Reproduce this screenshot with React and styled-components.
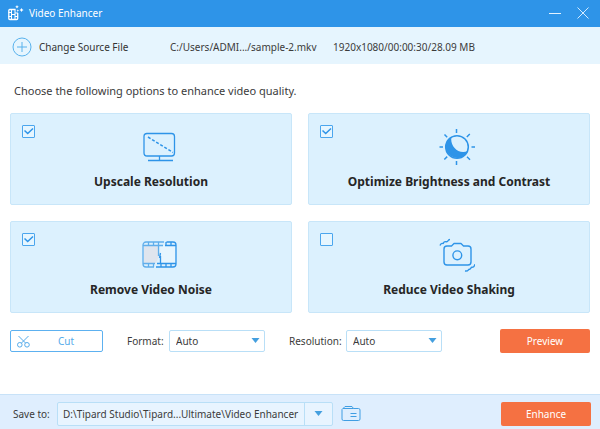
import React, { useState } from "react";
import styled, { createGlobalStyle } from "styled-components";

const blue = "#2e94e8";

const GlobalStyle = createGlobalStyle`
  *, *::before, *::after { box-sizing: border-box; }
  body {
    margin: 0;
    background: #fff;
    color: #3b3b3b;
    font: 10px/16px Tahoma, "Noto Sans", sans-serif;
  }
  button, input, select { font: inherit; color: inherit; margin: 0; }
  button { cursor: pointer; }
  svg { display: block; fill: none; flex: none; }
`;

const Window = styled.div`
  display: flex;
  flex-direction: column;
  min-height: 100vh;
`;

const TitleBar = styled.header`
  display: flex;
  align-items: center;
  height: 27px;
  padding: 0 8px 2px;
  background: ${blue};
  color: #fff;
`;

const Title = styled.h1`
  flex: 1;
  margin: 0 0 0 5px;
  font-size: 10px;
  font-weight: 400;
`;

const WindowActions = styled.div`
  display: flex;
  gap: 16px;
  padding-right: 3px;
`;

const IconButton = styled.button`
  padding: 0;
  border: 0;
  background: none;
  color: ${(p) => p.$color};
`;

const SourceBar = styled.section`
  display: flex;
  align-items: center;
  height: 37px;
  padding: 2px 12px 0;
  background: #e6f5fe;
`;

const SourceButton = styled.button`
  display: flex;
  align-items: center;
  gap: 7px;
  width: 158px;
  padding: 0;
  border: 0;
  background: none;
  color: #333;
  text-align: left;
`;

const SourcePath = styled.span`
  width: 163px;
`;

const Main = styled.main`
  flex: 1;
  padding: 17px 10px 0;
`;

const Intro = styled.p`
  margin: 0 0 13px;
  padding-left: 4px;
  font-size: 11px;
  line-height: 19px;
`;

const Options = styled.div`
  display: grid;
  grid-template-columns: 1fr 1fr;
  gap: 16px;
`;

const Card = styled.label`
  position: relative;
  display: flex;
  flex-direction: column;
  align-items: center;
  height: 92px;
  padding-top: 14px;
  border: 1px solid #c8e6f9;
  border-radius: 2px;
  background: #dcf1fe;
  color: ${blue};
  cursor: pointer;
`;

const CardIcon = styled.span`
  padding-left: 15px;
`;

const CardTitle = styled.span`
  margin-top: 6px;
  color: #262626;
  font-size: 12px;
  font-weight: 700;
  line-height: 16px;
`;

const CheckWrap = styled.span`
  position: absolute;
  top: 11px;
  left: 11px;
  display: grid;
  svg, input { grid-area: 1 / 1; }
  svg { pointer-events: none; visibility: hidden; }
  input:checked + svg { visibility: visible; }
`;

const CheckBox = styled.input`
  appearance: none;
  width: 13px;
  height: 13px;
  border: 1px solid #4ba6ee;
  border-radius: 1px;
  background: #e6f6ff;
`;

const Controls = styled.div`
  display: flex;
  align-items: center;
  margin-top: 16px;
`;

const CutButton = styled.button`
  display: flex;
  align-items: center;
  width: 93px;
  height: 22px;
  padding: 0 6px;
  border: 1px solid #5db1f0;
  border-radius: 2px;
  background: #fff;
  color: #55abea;
  span { flex: 1; padding-left: 6px; }
`;

const Field = styled.div`
  display: flex;
  align-items: center;
  margin-left: 24px;
  label { min-width: ${(p) => p.$labelWidth}; }
`;

const SelectWrap = styled.span`
  display: grid;
  align-items: center;
  color: #449fdf;
  svg { grid-area: 1 / 1; justify-self: end; margin-right: 5px; pointer-events: none; }
`;

const Select = styled.select`
  grid-area: 1 / 1;
  appearance: none;
  width: 96px;
  height: 22px;
  padding: 0 6px;
  border: 1px solid #b9dff7;
  border-radius: 2px;
  background: #fff;
  color: #3b3b3b;
`;

const PrimaryButton = styled.button`
  width: 90px;
  height: 24px;
  margin-left: auto;
  padding: 0;
  border: 0;
  border-radius: 2px;
  background: #f57142;
  color: #fff;
`;

const Footer = styled.footer`
  display: flex;
  align-items: center;
  height: 35px;
  padding: 4px 9px 0 13px;
  border-top: 1px solid #c8e2f8;
  background: #dfeefe;
  label { min-width: 44px; }
`;

const PathBox = styled.div`
  display: flex;
  width: 276px;
  height: 24px;
  margin-right: 8px;
  border: 1px solid #b9dff7;
  border-radius: 2px;
  background: #e8f4ff;
`;

const PathInput = styled.input`
  flex: 1;
  min-width: 0;
  padding: 0 5px;
  border: 0;
  background: none;
`;

const DropButton = styled.button`
  display: flex;
  align-items: center;
  justify-content: center;
  width: 28px;
  padding: 0;
  border: 0;
  border-left: 1px solid #b9dff7;
  background: none;
  color: #449fdf;
`;

const Arrow = () => (
  <svg width="9" height="6" viewBox="0 0 9 6" aria-hidden="true">
    <path d="M.500 0h8L4.500 5z" fill="currentColor" />
  </svg>
);

const Logo = () => (
  <svg width="16" height="16" viewBox="0 0 16 16" stroke="#fff" aria-hidden="true">
    <path d="M7.500 4.500H1.500A1 1 0 0 0 .800 5.500v8a1 1 0 0 0 1 1h6.900a1 1 0 0 0 1-1V8" strokeWidth="1.300" />
    <path d="M3.500 4.500v10M7 4.500v10M3.500 9.500H7M.500 7.500h3M.500 11.500h3M7 8h3M7 11.500h3" />
    <path d="M9 0l.6 1.200 1.200.6-1.200.6L9 3.600l-.6-1.200-1.200-.6 1.200-.6zM13.500 2.900l.7 1.400 1.400.7-1.400.7-.7 1.400-.7-1.400-1.400-.7 1.400-.7zM9.800 4.300l.4.900.9.400-.9.400-.4.900-.4-.9-.9-.4.900-.4z" fill="#fff" stroke="none" />
  </svg>
);

const Monitor = () => (
  <svg width="36" height="40" viewBox="0 0 36 40" stroke="currentColor" strokeWidth="1.300" aria-hidden="true">
    <rect x="3" y="5.500" width="30.500" height="22.500" rx="3" />
    <path d="M7 9l25 15.500" strokeDasharray="3 1.800" strokeWidth="1.500" />
    <path d="M18.500 28v4.500M7 32.500h25" />
  </svg>
);

const Sun = () => (
  <svg width="36" height="40" viewBox="0 0 36 40" stroke="currentColor" strokeWidth="1.500" aria-hidden="true">
    <circle cx="18" cy="19" r="11.300" />
    <path d="M12.500 8.500A11.500 11.500 0 1 0 28.800 23C19 27 10.500 17.500 12.500 8.500z" fill="currentColor" stroke="none" />
    <path d="M17.500 1v4M17.500 33v4M.500 19H4M32.500 19H36M5.500 6.500l2.700 2.700M27.800 9l3-3M5.300 31.500L8.200 28.600M28 28.800l3 2.900" />
  </svg>
);

const Film = () => (
  <svg width="36" height="40" viewBox="0 0 36 40" stroke="currentColor" aria-hidden="true">
    <path d="M3 10h15v10l-3 7H3z" fill="#dfe5ee" stroke="none" />
    <path d="M19 10h15v17H20z" fill="#e6f5fe" stroke="none" />
    <g stroke="#60aeeb" strokeWidth="1.300">
      <path d="M23 6H5A3 3 0 0 0 2 9v19a3 3 0 0 0 3 3h8M2 9.500h20M2 27.500h12M7.500 6v3.500M12.500 6v3.500M17.500 6v3.500M7.500 27.500V31M12.500 27.500V31M17.500 9.500V20" />
    </g>
    <path d="M25.500 6H32a3 3 0 0 1 3 3v19a3 3 0 0 1-3 3H15M24 9.500h11M16 27.500h19M25 6v3.500M30 6v3.500M20 27.500V31M25 27.500V31M30 27.500V31M19.500 20v7.500M19.500 17l-1 5" strokeWidth="1.300" />
  </svg>
);

const Camera = () => (
  <svg width="36" height="40" viewBox="0 0 36 40" stroke="currentColor" strokeWidth="1.400" strokeLinejoin="round" aria-hidden="true">
    <path d="M8 10h4.500l2.500-2.500h7l2.500 2.500H29a3 3 0 0 1 3 3v13a3 3 0 0 1-3 3H8a3 3 0 0 1-3-3V13a3 3 0 0 1 3-3z" />
    <circle cx="18.300" cy="19.300" r="4.400" />
    <path d="M1 9.500c1-3 2-2 3-2s0-2.500 3-1.800S8 3.500 11 3.500M26 35c4 .5 3-2 4.500-1.800s1-2 2.500-2 2 0 3-3" />
  </svg>
);

const Scissors = () => (
  <svg width="13" height="13" viewBox="0 0 13 13" stroke="currentColor" aria-hidden="true">
    <circle cx="2.800" cy="9.800" r="2.300" />
    <circle cx="10" cy="9.800" r="2.300" />
    <path d="M1.500 1l7 7M11.500 1l-7 7" />
  </svg>
);

const options = [
  { title: "Upscale Resolution", Icon: Monitor, on: true },
  { title: "Optimize Brightness and Contrast", Icon: Sun, on: true },
  { title: "Remove Video Noise", Icon: Film, on: true },
  { title: "Reduce Video Shaking", Icon: Camera, on: false },
];

function Option({ title, Icon, on }) {
  const [checked, setChecked] = useState(on);
  return (
    <Card>
      <CheckWrap>
        <CheckBox type="checkbox" checked={checked} onChange={(e) => setChecked(e.target.checked)} />
        <svg width="13" height="13" viewBox="0 0 13 13" stroke={blue} strokeWidth="1.500" aria-hidden="true">
          <path d="M2.500 5.500l3.200 3L11 3.500" />
        </svg>
      </CheckWrap>
      <CardIcon><Icon /></CardIcon>
      <CardTitle>{title}</CardTitle>
    </Card>
  );
}

function AutoSelect({ id, label, labelWidth }) {
  return (
    <Field $labelWidth={labelWidth}>
      <label htmlFor={id}>{label}</label>
      <SelectWrap>
        <Select id={id}>
          <option>Auto</option>
        </Select>
        <Arrow />
      </SelectWrap>
    </Field>
  );
}

export default function App() {
  return (
    <Window>
      <GlobalStyle />
      <TitleBar>
        <Logo />
        <Title>Video Enhancer</Title>
        <WindowActions>
          <IconButton $color="#e3f2ff" aria-label="Minimize">
            <svg width="12" height="12" viewBox="0 0 12 12" stroke="currentColor"><path d="M0 6.500h12" /></svg>
          </IconButton>
          <IconButton $color="#d3ebff" aria-label="Close">
            <svg width="12" height="12" viewBox="0 0 12 12" stroke="currentColor"><path d="M.500.500l11 11M11.500.500l-11 11" /></svg>
          </IconButton>
        </WindowActions>
      </TitleBar>
      <SourceBar>
        <SourceButton>
          <svg width="20" height="20" viewBox="0 0 20 20" stroke="#58b2ed" aria-hidden="true">
            <circle cx="10" cy="10" r="9" />
            <path d="M10 5v10M5 10h10" />
          </svg>
          Change Source File
        </SourceButton>
        <SourcePath>C:/Users/ADMI.../sample-2.mkv</SourcePath>
        <span>1920x1080/00:00:30/28.09 MB</span>
      </SourceBar>
      <Main>
        <Intro>Choose the following options to enhance video quality.</Intro>
        <Options>
          {options.map((o) => <Option key={o.title} {...o} />)}
        </Options>
        <Controls>
          <CutButton><Scissors /><span>Cut</span></CutButton>
          <AutoSelect id="format" label="Format:" labelWidth="42px" />
          <AutoSelect id="resolution" label="Resolution:" labelWidth="57px" />
          <PrimaryButton>Preview</PrimaryButton>
        </Controls>
      </Main>
      <Footer>
        <label htmlFor="path">Save to:</label>
        <PathBox>
          <PathInput id="path" readOnly value="D:\Tipard Studio\Tipard...Ultimate\Video Enhancer" />
          <DropButton aria-label="Choose folder"><Arrow /></DropButton>
        </PathBox>
        <IconButton $color="#409ee3" aria-label="Open folder">
          <svg width="20" height="16" viewBox="0 0 20 16" stroke="currentColor">
            <path d="M1 3.500V13a1.500 1.500 0 0 0 1.500 1.500h15A1.500 1.500 0 0 0 19 13V4a1.500 1.500 0 0 0-1.500-1.500h-5L11 .500H4L1 3.500zM2 2.500h10.500M9.500 7.500h6M9.500 10.500h6" />
          </svg>
        </IconButton>
        <PrimaryButton>Enhance</PrimaryButton>
      </Footer>
    </Window>
  );
}
